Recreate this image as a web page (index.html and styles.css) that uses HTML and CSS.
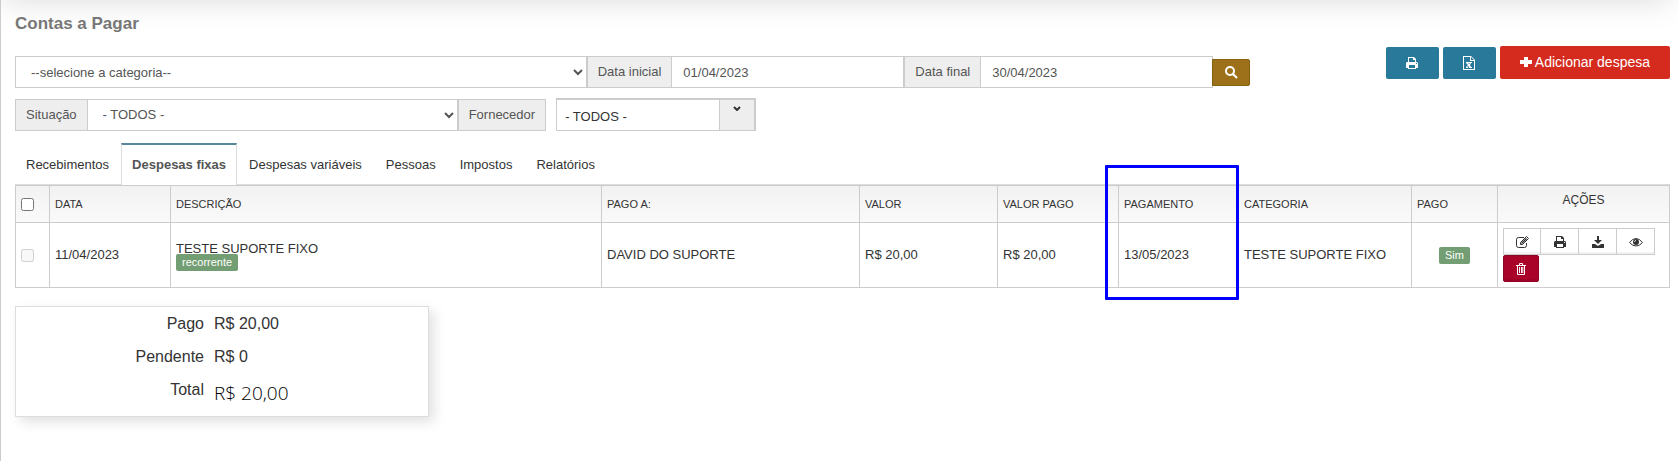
FILE: index.html
```html
<!DOCTYPE html>
<html lang="pt-BR">
<head>
  <meta charset="UTF-8">
  <title>Contas a Pagar</title>
  <link rel="stylesheet" href="styles.css">
</head>
<body>

  <svg class="sprite" aria-hidden="true">
    <symbol id="i-print" viewBox="0 0 14 14">
      <path fill-rule="evenodd" d="M3 1h6l2 2v3h1l1 1v5h-2v1H3v-1H1V7l1-1h1zM4 2v4h6V4H8V2zM4 9v3h6V9zM11 7v1h1V7z"/>
    </symbol>
    <symbol id="i-excel" viewBox="0 0 14 14">
      <path fill-rule="evenodd" d="M1 0h8l4 4v10H1zM2 1v12h10V5H8V1zM9 1v3h3zM4 6h3v1H6l1 1 1-1H7V6h3v1H9L8 9l1 2h1v1H7v-1l-1-1-1 1h1v1H4v-1l2-2-2-2z"/>
    </symbol>
    <symbol id="i-plus" viewBox="0 0 12 12">
      <path d="M4 1h4v3h4v4H8v3H4V8H0V4h4z"/>
    </symbol>
    <symbol id="i-search" viewBox="0 0 14 14">
      <path fill="none" stroke="currentColor" stroke-width="2" d="M9 9l4 4M10 6a4 4 0 1 1-8 0 4 4 0 0 1 8 0z"/>
    </symbol>
    <symbol id="i-edit" viewBox="0 0 14 14">
      <path fill="none" stroke="currentColor" d="M9 2.500H3.500a2 2 0 0 0-2 2v6a2 2 0 0 0 2 2h6a2 2 0 0 0 2-2V8M5.500 9.500v-2l6-6 2 2-6 6z"/>
      <path d="M6 8l5-5 1 1-5 5z"/>
    </symbol>
    <symbol id="i-download" viewBox="0 0 14 14">
      <path d="M6 1h2v4h3L7 9 3 5h3zM1 9h3l3 2 3-2h3v4H1z"/>
    </symbol>
    <symbol id="i-eye" viewBox="0 0 14 14">
      <path fill="none" stroke="currentColor" d="M.500 7.500Q3.500 3.500 7 3.500t6.500 4Q10.500 11 7 11T.500 7.500z"/>
      <circle cx="7" cy="7" r="3"/>
      <path fill="none" stroke="#fff" stroke-width=".8" d="M5.500 7Q5.500 5.500 7 5.500"/>
    </symbol>
    <symbol id="i-trash" viewBox="0 0 14 14">
      <path fill="none" stroke="currentColor" d="M2 3.500h10M5.500 3V1.500h3V3M3.500 4v8.500h7V4M5.500 5v6M7.500 5v6M8.800 5v6"/>
    </symbol>
  </svg>

  <div class="top-shadow"></div>

  <main class="page">
    <h1>Contas a Pagar</h1>

    <div class="toolbar">
      <form class="filters">
        <div class="filter-row">
          <select class="field" aria-label="Categoria">
            <option>--selecione a categoria--</option>
          </select>
          <label class="addon" for="data-inicial">Data inicial</label>
          <input class="field date" type="text" id="data-inicial" value="01/04/2023">
          <label class="addon" for="data-final">Data final</label>
          <input class="field date" type="text" id="data-final" value="30/04/2023">
          <button class="btn-search" type="button" aria-label="Pesquisar"><svg class="icon"><use href="#i-search"/></svg></button>
        </div>
        <div class="filter-row row-small">
          <label class="addon" for="situacao">Situação</label>
          <select class="field" id="situacao">
            <option>- TODOS -</option>
          </select>
          <label class="addon last" for="fornecedor">Fornecedor</label>
          <div class="combo">
            <input type="text" id="fornecedor" value="- TODOS -">
            <button type="button" aria-label="Abrir lista">
              <svg class="chevron" viewBox="0 0 8 5"><path d="M1 1l3 3 3-3"/></svg>
            </button>
          </div>
        </div>
      </form>

      <div class="actions">
        <button class="btn btn-info" type="button" aria-label="Imprimir"><svg class="icon"><use href="#i-print"/></svg></button>
        <button class="btn btn-info" type="button" aria-label="Exportar"><svg class="icon"><use href="#i-excel"/></svg></button>
        <button class="btn btn-danger" type="button"><svg class="icon plus"><use href="#i-plus"/></svg>Adicionar despesa</button>
      </div>
    </div>

    <nav class="tabs">
      <a href="#">Recebimentos</a>
      <a href="#" class="active">Despesas fixas</a>
      <a href="#">Despesas variáveis</a>
      <a href="#">Pessoas</a>
      <a href="#">Impostos</a>
      <a href="#">Relatórios</a>
    </nav>

    <table class="grid">
      <colgroup>
        <col class="c-check"><col class="c-date"><col><col class="c-to"><col class="c-value">
        <col class="c-date"><col class="c-payment"><col class="c-cat"><col class="c-paid"><col class="c-actions">
      </colgroup>
      <thead>
        <tr>
          <th><input type="checkbox" aria-label="Selecionar todos"></th>
          <th>DATA</th>
          <th>DESCRIÇÃO</th>
          <th>PAGO A:</th>
          <th>VALOR</th>
          <th>VALOR PAGO</th>
          <th class="marked">PAGAMENTO<span class="highlight"></span></th>
          <th>CATEGORIA</th>
          <th>PAGO</th>
          <th class="th-actions">AÇÕES</th>
        </tr>
      </thead>
      <tbody>
        <tr>
          <td><input type="checkbox" aria-label="Selecionar" disabled></td>
          <td>11/04/2023</td>
          <td>
            <div class="desc">TESTE SUPORTE FIXO</div>
            <div class="badge">recorrente</div>
          </td>
          <td>DAVID DO SUPORTE</td>
          <td>R$ 20,00</td>
          <td>R$ 20,00</td>
          <td>13/05/2023</td>
          <td>TESTE SUPORTE FIXO</td>
          <td><div class="badge centered">Sim</div></td>
          <td>
            <div class="btn-group">
              <button type="button" aria-label="Editar"><svg class="icon"><use href="#i-edit"/></svg></button>
              <button type="button" aria-label="Imprimir"><svg class="icon"><use href="#i-print"/></svg></button>
              <button type="button" aria-label="Baixar"><svg class="icon"><use href="#i-download"/></svg></button>
              <button type="button" aria-label="Ver"><svg class="icon"><use href="#i-eye"/></svg></button>
            </div>
            <button class="btn-delete" type="button" aria-label="Excluir"><svg class="icon"><use href="#i-trash"/></svg></button>
          </td>
        </tr>
      </tbody>
    </table>

    <dl class="summary">
      <dt>Pago</dt>
      <dd>R$ 20,00</dd>
      <dt>Pendente</dt>
      <dd>R$ 0</dd>
      <dt>Total</dt>
      <dd class="total">R$ 20,00</dd>
    </dl>
  </main>

</body>
</html>
```
FILE: styles.css
```css
:root {
  --line: #ccc;
  --text: #333;
  --muted: #555;
  --addon: #eee;
  --info: #28799a;
  --danger: #d52b1e;
  --green: #739e73;
}

* {
  box-sizing: border-box;
}

body {
  margin: 0;
  min-height: 100vh;
  border-left: 1px solid var(--line);
  font-family: "Liberation Sans", Arial, sans-serif;
  font-size: 13px;
  line-height: 20px;
  color: var(--text);
  background: #fff;
  overflow: hidden;
}

button,
input,
select {
  font: inherit;
  color: inherit;
  margin: 0;
}

button {
  cursor: pointer;
}

.sprite {
  display: none;
}

.icon {
  display: block;
  width: 14px;
  height: 14px;
  fill: currentColor;
}

/* shadow dropped by the bar above the page */
.top-shadow {
  height: 40px;
  margin-top: -40px;
  margin-right: 8px;
  box-shadow: 0 0 32px rgba(0, 0, 0, 0.15);
}

.page {
  padding: 14px 8px 0 14px;
}

h1 {
  margin: 0 0 12px;
  font-size: 17px;
  line-height: 20px;
  color: #777;
}

/* filters */
.toolbar {
  display: flex;
  justify-content: space-between;
  align-items: flex-start;
}

.filters {
  width: 75%;
  padding: 10px 6px 0 0;
}

.filter-row {
  display: flex;
  align-items: center;
  margin-bottom: 10px;
}

.row-small {
  width: 60%;
}

.field {
  flex: 1 1 0;
  min-width: 0;
  height: 32px;
  padding: 0 11px;
  border: 1px solid var(--line);
  border-radius: 0;
  background: #fff;
  color: var(--muted);
}

.field.date {
  flex: 0 1 233px;
}

select.field {
  padding: 0 0 0 11px;
}

.addon {
  height: 32px;
  padding: 5px 10px;
  border: 1px solid var(--line);
  border-right-width: 0;
  background: var(--addon);
  color: var(--muted);
}

.addon.last {
  border-right-width: 1px;
  margin-right: 10px;
}

.btn-search {
  display: flex;
  align-items: center;
  justify-content: center;
  width: 38px;
  height: 27px;
  padding: 0;
  margin-left: -1px;
  border: 1px solid #85610f;
  border-radius: 0 2px 2px 0;
  background: #9c7119;
  color: #fff;
}

.combo {
  display: flex;
  width: 200px;
  height: 33px;
  border: 1px solid var(--line);
  border-top-width: 2px;
  border-right-width: 2px;
}

.combo input {
  flex: 1;
  min-width: 0;
  padding: 3px 8px 0;
  border: 0;
}

.combo button {
  display: flex;
  justify-content: center;
  width: 35px;
  padding: 6px 0;
  border: 0;
  border-left: 1px solid var(--line);
  background: var(--addon);
}

.chevron {
  width: 8px;
  height: 5px;
  fill: none;
  stroke: #333;
  stroke-width: 2;
}

/* page buttons */
.actions {
  display: flex;
  align-items: flex-end;
  gap: 4px;
}

.btn {
  display: flex;
  align-items: center;
  justify-content: center;
  height: 32px;
  border: 0;
  border-radius: 2px;
  color: #fff;
}

.btn-info {
  width: 53px;
  padding: 0;
  background: var(--info);
}

.btn-danger {
  height: 33px;
  padding: 0 20px 2px;
  background: var(--danger);
  font-size: 14px;
}

.plus {
  width: 12px;
  height: 12px;
  margin-right: 3px;
}

/* tabs */
.tabs {
  display: flex;
  margin-top: 2px;
  border-bottom: 1px solid #ddd;
}

.tabs a {
  padding: 10px 12px 9px;
  border-top: 2px solid transparent;
  color: var(--text);
  text-decoration: none;
}

.tabs a:first-child {
  padding-left: 11px;
}

.tabs .active {
  padding: 10px 10px 9px;
  margin-bottom: -1px;
  border: 1px solid #ddd;
  border-top: 2px solid #57889c;
  border-bottom: 0;
  background: #fff;
  color: #555;
  font-weight: bold;
}

/* table */
.grid {
  width: 100%;
  border-collapse: collapse;
  table-layout: fixed;
}

.grid th,
.grid td {
  padding: 5px;
  border: 1px solid var(--line);
  text-align: left;
}

.grid th {
  height: 37px;
  font-size: 11px;
  font-weight: normal;
}

.grid thead tr {
  background: linear-gradient(#f2f2f2, #fafafa);
}

.grid .th-actions {
  font-size: 12px;
  line-height: 18px;
  text-align: center;
  vertical-align: top;
}

.c-check { width: 34px; }
.c-date { width: 121px; }
.c-payment { width: 120px; }
.c-to { width: 258px; }
.c-value { width: 138px; }
.c-cat { width: 173px; }
.c-paid { width: 86px; }
.c-actions { width: 172px; }

.grid input {
  display: block;
  width: 13px;
  height: 13px;
}

.desc {
  line-height: 18px;
}

.badge {
  width: fit-content;
  padding: 0 6px;
  border-radius: 2px;
  background: var(--green);
  color: #fff;
  font-size: 11px;
  line-height: 17px;
}

.desc + .badge {
  margin-top: -4px;
}

.centered {
  margin: 0 auto;
}

.marked {
  position: relative;
}

.highlight {
  position: absolute;
  top: -21px;
  left: -14px;
  width: 134px;
  height: 135px;
  border: 3px solid #00f;
  border-radius: 1px;
}

.btn-group {
  display: flex;
}

.btn-group button,
.btn-delete {
  display: flex;
  align-items: center;
  justify-content: center;
  width: 38px;
  height: 27px;
  padding: 0;
  border: 1px solid var(--line);
  background: #fff;
  box-shadow: inset 0 -2px 0 rgba(0, 0, 0, 0.05);
}

.btn-group button + button {
  border-left: 0;
}

.btn-delete {
  width: 36px;
  border-color: #900323;
  border-radius: 2px;
  background: #a90329;
  color: #fff;
}

/* totals */
.summary {
  display: grid;
  grid-template-columns: 188px 1fr;
  column-gap: 10px;
  width: 25%;
  margin: 18px 0 0;
  padding: 0 0 10px;
  border: 1px solid #ddd;
  background: #fff;
  box-shadow: 5px 5px 12px rgba(0, 0, 0, 0.12);
  font-size: 16px;
  line-height: 33px;
}

.summary dt {
  text-align: right;
}

.summary dd {
  margin: 0;
}

.summary .total {
  padding-top: 4px;
  margin-bottom: -4px;
  font-family: "Open Sans", sans-serif;
  font-size: 19px;
  font-weight: 300;
  color: #000;
}
```
